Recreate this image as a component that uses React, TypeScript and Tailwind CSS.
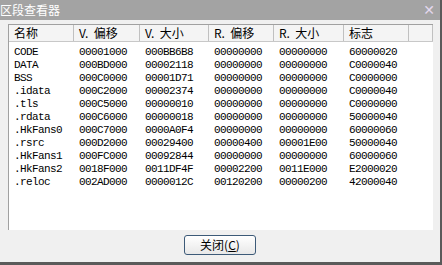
const cols = [
  { title: '名称', w: 'w-[65px]' },
  { title: 'V.  偏移', w: 'w-[66px]' },
  { title: 'V.  大小', w: 'w-[69px]' },
  { title: 'R.  偏移', w: 'w-[65px]' },
  { title: 'R.  大小', w: 'w-[70px]' },
  { title: '标志', w: 'w-[65px]' },
];

const rows = [
  ['CODE', '00001000', '000BB6B8', '00000000', '00000000', '60000020'],
  ['DATA', '000BD000', '00002118', '00000000', '00000000', 'C0000040'],
  ['BSS', '000C0000', '00001D71', '00000000', '00000000', 'C0000000'],
  ['.idata', '000C2000', '00002374', '00000000', '00000000', 'C0000040'],
  ['.tls', '000C5000', '00000010', '00000000', '00000000', 'C0000000'],
  ['.rdata', '000C6000', '00000018', '00000000', '00000000', '50000040'],
  ['.HkFans0', '000C7000', '0000A0F4', '00000000', '00000000', '60000060'],
  ['.rsrc', '000D2000', '00029400', '00000400', '00001E00', '50000040'],
  ['.HkFans1', '000FC000', '00092844', '00000000', '00000000', '60000060'],
  ['.HkFans2', '0018F000', '0011DF4F', '00002200', '0011E000', 'E2000020'],
  ['.reloc', '002AD000', '0000012C', '00120200', '00000200', '42000040'],
];

const cjk = "font-['Noto_Sans_CJK_SC',sans-serif]";
const mono = "font-['Liberation_Mono',monospace]";

export default function App() {
  return (
    <div className="w-[442px] h-[265px] bg-[#f0f0f0] flex flex-col border-r-2 border-b-[3px] border-[#5a5a5a] overflow-hidden">
      <div className="h-[20px] shrink-0 bg-[#a3a3a3] flex items-center justify-between pr-[5px]">
        <span className={`${cjk} text-[12px] leading-none text-white`}>区段查看器</span>
        <span className="text-[#e4d8ee] text-[14px] font-bold leading-none font-['DejaVu_Sans',sans-serif]">✕</span>
      </div>
      <div className="mt-[4px] ml-[8px] w-[425px] h-[206px] bg-white border-l border-t border-[#a0a0a0] flex flex-col">
        <div className="flex h-[17px] bg-[#f4f4f4] border-b border-[#c8c8c8]">
          {cols.map((c) => (
            <div key={c.title} className={`${c.w} shrink-0 border-r border-[#c0c0c0] pl-[5px] flex items-center whitespace-pre ${cjk} text-[12px] text-black leading-none`}>
              {c.title}
            </div>
          ))}
          <div className="w-[24px] border-r border-[#c0c0c0]" />
        </div>
        <div className="pt-[4px] flex flex-col">
          {rows.map((r) => (
            <div key={r[0]} className="flex h-[13px] items-center">
              {r.map((v, i) => (
                <div key={i} className={`${cols[i].w} shrink-0 pl-[5px] ${mono} text-[11px] tracking-[-0.6px] leading-none text-black`}>
                  {v}
                </div>
              ))}
            </div>
          ))}
        </div>
      </div>
      <div className="flex justify-center mt-[5px]">
        <button className="w-[72px] h-[20px] border border-[#3c5a78] rounded-[3px] bg-gradient-to-b from-white to-[#e8e8e8] flex items-center justify-center text-[12px] leading-none text-black">
          <span className={cjk}>关闭(</span>
          <span className={`${cjk} underline`}>C</span>
          <span className={cjk}>)</span>
        </button>
      </div>
    </div>
  );
}
